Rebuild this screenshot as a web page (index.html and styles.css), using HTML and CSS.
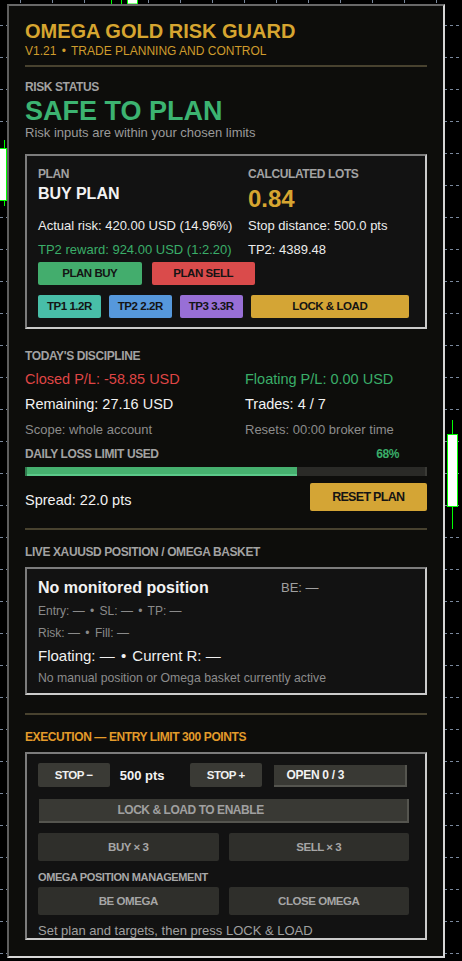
FILE: index.html
```html
<!DOCTYPE html>
<html>
<head>
<meta charset="utf-8">
<title>Omega Gold Risk Guard</title>
<link rel="stylesheet" href="styles.css">
</head>
<body>
<svg class="chart" width="462" height="961" viewBox="0 0 462 961">
  <defs>
    <pattern id="hgrid" width="6" height="32" patternUnits="userSpaceOnUse">
      <rect x="0" y="25" width="3" height="1" fill="#7a889c"/>
    </pattern>
  </defs>
  <rect width="462" height="961" fill="url(#hgrid)"/>
  <g fill="#7a889c">
    <rect x="20" y="0" width="1" height="3"/><rect x="52" y="0" width="1" height="3"/>
    <rect x="84" y="0" width="1" height="3"/><rect x="148" y="0" width="1" height="3"/>
    <rect x="180" y="0" width="1" height="3"/><rect x="212" y="0" width="1" height="3"/>
    <rect x="244" y="0" width="1" height="3"/><rect x="276" y="0" width="1" height="3"/>
    <rect x="308" y="0" width="1" height="3"/><rect x="340" y="0" width="1" height="3"/>
    <rect x="372" y="0" width="1" height="3"/><rect x="404" y="0" width="1" height="3"/>
    <rect x="436" y="0" width="1" height="3"/>
  </g>
  <g fill="#00ff00">
    <rect x="111" y="0" width="1" height="5"/>
    <rect x="121" y="0" width="1" height="5"/>
  </g>
  <rect x="127.5" y="-1" width="10" height="5" fill="#ffffff" stroke="#00ff00" stroke-width="1"/>
  <line x1="4.5" y1="140" x2="4.5" y2="206" stroke="#00ff00" stroke-width="1"/>
  <rect x="-1.5" y="148.5" width="8" height="52" fill="#ffffff" stroke="#00ff00" stroke-width="1"/>
  <line x1="452.5" y1="420" x2="452.5" y2="529" stroke="#00ff00" stroke-width="1"/>
  <rect x="447.5" y="434.5" width="10" height="72" fill="#ffffff" stroke="#00ff00" stroke-width="1"/>
</svg>

<div class="panel">
  <div class="title">OMEGA GOLD RISK GUARD</div>
  <div class="subtitle">V1.21 <span class="dot">•</span> TRADE PLANNING AND CONTROL</div>
  <div class="sep sep-head"></div>

  <div class="label status-label">RISK STATUS</div>
  <div class="safe">SAFE TO PLAN</div>
  <div class="note">Risk inputs are within your chosen limits</div>

  <div class="box plan">
    <div class="plan-grid">
      <div class="col">
        <div class="label">PLAN</div>
        <div class="plan-name">BUY PLAN</div>
      </div>
      <div class="col">
        <div class="label">CALCULATED LOTS</div>
        <div class="lots">0.84</div>
      </div>
      <div class="txt first">Actual risk: 420.00 USD (14.96%)</div>
      <div class="txt first">Stop distance: 500.0 pts</div>
      <div class="txt second green">TP2 reward: 924.00 USD (1:2.20)</div>
      <div class="txt second">TP2: 4389.48</div>
    </div>
    <div class="btn-row row-plan">
      <div class="btn b-buy">PLAN BUY</div>
      <div class="btn b-sell">PLAN SELL</div>
    </div>
    <div class="btn-row row-tp">
      <div class="btn tp b-tp1">TP1 1.2R</div>
      <div class="btn tp b-tp2">TP2 2.2R</div>
      <div class="btn tp b-tp3">TP3 3.3R</div>
      <div class="btn b-lock">LOCK &amp; LOAD</div>
    </div>
  </div>

  <div class="label disc-label">TODAY'S DISCIPLINE</div>
  <div class="disc-grid">
    <div class="big red">Closed P/L: -58.85 USD</div>
    <div class="big green">Floating P/L: 0.00 USD</div>
    <div class="big second">Remaining: 27.16 USD</div>
    <div class="big second">Trades: 4 / 7</div>
    <div class="small">Scope: whole account</div>
    <div class="small">Resets: 00:00 broker time</div>
  </div>
  <div class="limit-row">
    <div class="label">DAILY LOSS LIMIT USED</div>
    <div class="label pct">68%</div>
  </div>
  <div class="progress"><div class="fill" style="width:68%"></div></div>
  <div class="spread-row">
    <div class="spread">Spread: 22.0 pts</div>
    <div class="btn b-reset">RESET PLAN</div>
  </div>
  <div class="sep sep-mid"></div>

  <div class="label live-label">LIVE XAUUSD POSITION / OMEGA BASKET</div>
  <div class="box pos">
    <div class="pos-head">
      <div class="pos-title">No monitored position</div>
      <div class="be">BE: —</div>
    </div>
    <div class="pline first-line">Entry: — <span class="dot">•</span> SL: — <span class="dot">•</span> TP: —</div>
    <div class="pline">Risk: — <span class="dot">•</span> Fill: —</div>
    <div class="floating">Floating: — <span class="dot">•</span> Current R: —</div>
    <div class="pos-note">No manual position or Omega basket currently active</div>
  </div>
  <div class="sep sep-low"></div>

  <div class="label exec-label">EXECUTION — ENTRY LIMIT 300 POINTS</div>
  <div class="box exec">
    <div class="stop-row">
      <div class="btn dark stop">STOP −</div>
      <div class="pts">500 pts</div>
      <div class="btn dark stop">STOP +</div>
      <div class="open">OPEN 0 / 3</div>
    </div>
    <div class="enable">LOCK &amp; LOAD TO ENABLE</div>
    <div class="btn-row pair row-trade">
      <div class="btn muted">BUY × 3</div>
      <div class="btn muted">SELL × 3</div>
    </div>
    <div class="mgmt-label">OMEGA POSITION MANAGEMENT</div>
    <div class="btn-row pair row-mgmt">
      <div class="btn muted">BE OMEGA</div>
      <div class="btn muted">CLOSE OMEGA</div>
    </div>
    <div class="exec-note">Set plan and targets, then press LOCK &amp; LOAD</div>
  </div>
</div>
</body>
</html>
```
FILE: styles.css
```css
* { box-sizing: border-box; margin: 0; padding: 0; }
html, body { width: 462px; height: 961px; overflow: hidden; }
body {
  background: #000;
  position: relative;
  font-family: "Liberation Sans", Arial, sans-serif;
  color: #ededed;
}
.chart { position: absolute; left: 0; top: 0; display: block; }

.panel {
  position: relative;
  margin: 4px 0 0 7px;
  width: 438px;
  height: 954px;
  background: #0d0d0b;
  border: 2px solid;
  border-color: #686868 #d6d6d6 #d6d6d6 #5e5e5e;
  padding: 13px 16px 0 16px;
  overflow: hidden;
}

.title { font-size: 20px; line-height: 24px; font-weight: 700; color: #d6a530; }
.subtitle { font-size: 12px; line-height: 15px; margin-top: 1px; color: #cf9c2c; }
.subtitle .dot { margin: 0 2px; }

.sep { height: 2px; background: #48422f; }
.sep-head { margin-top: 6px; }
.sep-mid { margin-top: 17px; }
.sep-low { margin-top: 18px; }

.label {
  font-size: 12px; line-height: 14px; font-weight: 700;
  color: #a2a2a2; letter-spacing: -0.4px;
}
.status-label { margin-top: 13px; }
.safe { font-size: 27px; line-height: 25px; font-weight: 700; color: #3cb371; margin-top: 4.5px; }
.note { font-size: 13px; line-height: 13px; color: #9a9a9a; margin-top: 2.5px; }

.box {
  background: #121212;
  border: 2px solid;
  border-color: #7c7c7c #cbcbcb #cbcbcb #7c7c7c;
}

/* plan */
.plan { margin-top: 15px; padding: 11px 16px 9px 11px; }
.plan-grid { display: grid; grid-template-columns: 210px 1fr; }
.plan-name { font-size: 16px; line-height: 20px; font-weight: 700; color: #f2f2f2; margin-top: 2.5px; }
.lots { font-size: 24px; line-height: 28px; font-weight: 700; color: #d6a530; margin-top: 4px; }
.txt { font-size: 13px; line-height: 16px; color: #ececec; }
.txt.first { margin-top: 5px; }
.txt.second { margin-top: 8px; }
.green { color: #3aae69; }
.red { color: #df4545; }

.btn-row { display: flex; }
.btn {
  display: flex; align-items: center; justify-content: center;
  border-radius: 2px;
  font-size: 11.5px; font-weight: 700; letter-spacing: -0.45px;
  color: #141414;
}
.row-plan { margin-top: 3.5px; gap: 10px; }
.row-plan .btn { width: 103.5px; height: 23px; }
.row-tp { margin-top: 10px; gap: 8px; }
.row-tp .btn { height: 23px; }
.tp { width: 63.5px; }
.b-buy { background: #43ad6d; }
.b-sell { background: #da4b4b; }
.b-tp1 { background: #48bea8; }
.b-tp2 { background: #5698dc; }
.b-tp3 { background: #986fd6; }
.b-lock { background: #d4a535; width: 160px; margin-left: auto; }

/* discipline */
.disc-label { margin-top: 20px; }
.disc-grid { display: grid; grid-template-columns: 220px 1fr; }
.big { font-size: 14.5px; line-height: 18px; margin-top: 7.3px; }
.big.second { margin-top: 7.7px; color: #f2f2f2; }
.small { font-size: 13px; line-height: 16px; color: #8c8c8c; margin-top: 8.3px; }
.limit-row { display: flex; justify-content: space-between; margin-top: 9px; }
.pct { color: #3aae69; margin-right: 28px; }
.progress {
  margin-top: 6.5px; height: 8.5px; background: #2a2a27;
  border-right: 2px solid #3a3a36;
}
.fill {
  height: 100%; background: #46b06f;
  border-left: 2px solid #2f7b4e;
  box-shadow: inset 0 -2px 0 #5cc88a;
}
.spread-row { display: flex; justify-content: space-between; align-items: flex-start; margin-top: 7.5px; }
.spread { font-size: 14.5px; line-height: 18px; margin-top: 7.4px; color: #f2f2f2; }
.b-reset {
  width: 117.5px; height: 27.5px; background: #d4a535;
  font-size: 12.5px; letter-spacing: -0.7px;
}

/* position */
.live-label { margin-top: 15.6px; }
.pos { margin-top: 8px; padding: 9px 12px 6.8px 11px; }
.pos-head { display: flex; align-items: flex-start; }
.pos-title { width: 243px; font-size: 16px; line-height: 20px; font-weight: 700; color: #f2f2f2; }
.be { font-size: 13px; line-height: 20px; color: #a0a0a0; }
.pline { font-size: 12px; line-height: 15px; color: #8a8a8a; margin-top: 7.2px; }
.pline.first-line { margin-top: 5.3px; }
.pline .dot, .floating .dot { margin: 0 2px; }
.floating { font-size: 15px; line-height: 18px; color: #f0f0f0; margin-top: 6.6px; }
.pos-note { font-size: 12.25px; line-height: 15px; color: #8c8c8c; margin-top: 5.4px; }

/* execution */
.exec-label { margin-top: 15.4px; color: #e39b2a; }
.exec { margin-top: 8px; padding: 9.3px 16px 0 11px; }
.stop-row { display: flex; align-items: flex-start; }
.dark { background: #3a3a35; color: #f0f0f0; }
.stop { width: 71.5px; height: 23.7px; }
.pts {
  width: 80.5px; padding-left: 10.3px; margin-top: 5.1px;
  font-size: 13px; line-height: 16px; font-weight: 700; color: #f2f2f2;
}
.open {
  margin-left: 12.3px; margin-top: 1.7px;
  width: 133.7px; height: 22px;
  background: #393934;
  border-right: 2px solid #55554f; border-bottom: 2px solid #55554f;
  padding-left: 12.7px;
  font-size: 12px; line-height: 20px; font-weight: 700; letter-spacing: -0.3px; color: #f2f2f2;
}
.enable {
  margin: 12px 0 0 1.4px;
  height: 24.3px;
  background: #393934;
  border-right: 2px solid #55554f; border-bottom: 2px solid #55554f;
  padding-left: 78px;
  font-size: 12px; line-height: 22.3px; font-weight: 700; letter-spacing: -0.45px;
  color: #a0a0a0;
}
.pair { gap: 10px; }
.pair .btn { flex: 1; }
.muted { background: #2f2f2b; color: #a6a6a6; }
.row-trade { margin-top: 10px; }
.row-trade .btn { height: 27.7px; }
.mgmt-label {
  margin-top: 9.4px; font-size: 11px; line-height: 14px; font-weight: 700;
  letter-spacing: -0.4px; color: #a8a8a8;
}
.row-mgmt { margin-top: 2.6px; }
.row-mgmt .btn { height: 28px; }
.exec-note { font-size: 13px; line-height: 15px; color: #a0a0a0; margin-top: 8.3px; }
```
